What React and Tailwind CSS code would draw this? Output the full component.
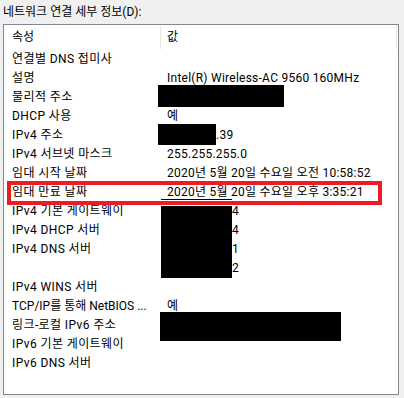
import React from 'react';

const rows = [
  { label: "연결별 DNS 접미사", value: "" },
  { label: "설명", value: "Intel(R) Wireless-AC 9560 160MHz" },
  { label: "물리적 주소", value: "" },
  { label: "DHCP 사용", value: "예" },
  { label: "IPv4 주소", value: ".39", pad: "pl-[56px]" },
  { label: "IPv4 서브넷 마스크", value: "255.255.255.0" },
  { label: "임대 시작 날짜", value: "2020년 5월 20일 수요일 오전 10:58:52" },
  { label: "임대 만료 날짜", value: "2020년 5월 20일 수요일 오후 3:35:21" },
  { label: "IPv4 기본 게이트웨이", value: "4", pad: "pl-[72px]" },
  { label: "IPv4 DHCP 서버", value: "4", pad: "pl-[72px]" },
  { label: "IPv4 DNS 서버", value: "1", pad: "pl-[72px]" },
  { label: "", value: "2", pad: "pl-[72px]" },
  { label: "IPv4 WINS 서버", value: "" },
  { label: "TCP/IP를 통해 NetBIOS ...", value: "예", tight: true },
  { label: "링크-로컬 IPv6 주소", value: "" },
  { label: "IPv6 기본 게이트웨이", value: "" },
  { label: "IPv6 DNS 서버", value: "" },
];

const App = () => {
  return (
    <div className="w-[404px] h-[398px] bg-[#f0f0f0] text-black text-[12px] leading-[19px] overflow-hidden font-[Roboto,'Noto_Sans_CJK_KR',sans-serif]">
      <div className="h-[24px] pl-[3px] pt-[3px]">네트워크 연결 세부 정보(D):</div>

      <div className="relative ml-[3px] w-[396px] h-[371px] border border-[#828790] bg-white">
        {/* header */}
        <div className="flex h-[25px] items-center">
          <div className="w-[156px] pl-[8px]">속성</div>
          <div className="self-stretch w-px my-[1px] bg-[#e5e5e5]" />
          <div className="flex-1 pl-[6px]">값</div>
          <div className="self-stretch w-px my-[1px] mr-[1px] bg-[#e5e5e5]" />
        </div>

        <div className="flex flex-col">
          {rows.map((row, i) => (
            <div key={i} className="flex h-[19px] items-center whitespace-nowrap">
              <div className={row.tight ? "w-[156px] pl-[8px]" : "w-[156px] pl-[8px] tracking-[0.4px]"}>{row.label}</div>
              <div className={(row.pad ? row.pad : "pl-[7px]") + " tracking-[0.25px]"}>{row.value}</div>
            </div>
          ))}
        </div>

        {/* redactions */}
        <div className="absolute left-[154px] top-[60px] w-[126px] h-[22px] bg-black" />
        <div className="absolute left-[154px] top-[99px] w-[58px] h-[21px] bg-black" />
        <div className="absolute left-[157px] top-[174px] w-[71px] h-px bg-black" />
        <div className="absolute left-[157px] top-[181px] w-[71px] h-[72px] bg-black" />
        <div className="absolute left-[156px] top-[287px] w-[181px] h-[29px] bg-black" />

        {/* highlight */}
        <div className="absolute left-[3px] top-[156px] w-[375px] h-[24px] border-4 border-[#ec1c24]" />
      </div>
    </div>
  );
};

export default App;
